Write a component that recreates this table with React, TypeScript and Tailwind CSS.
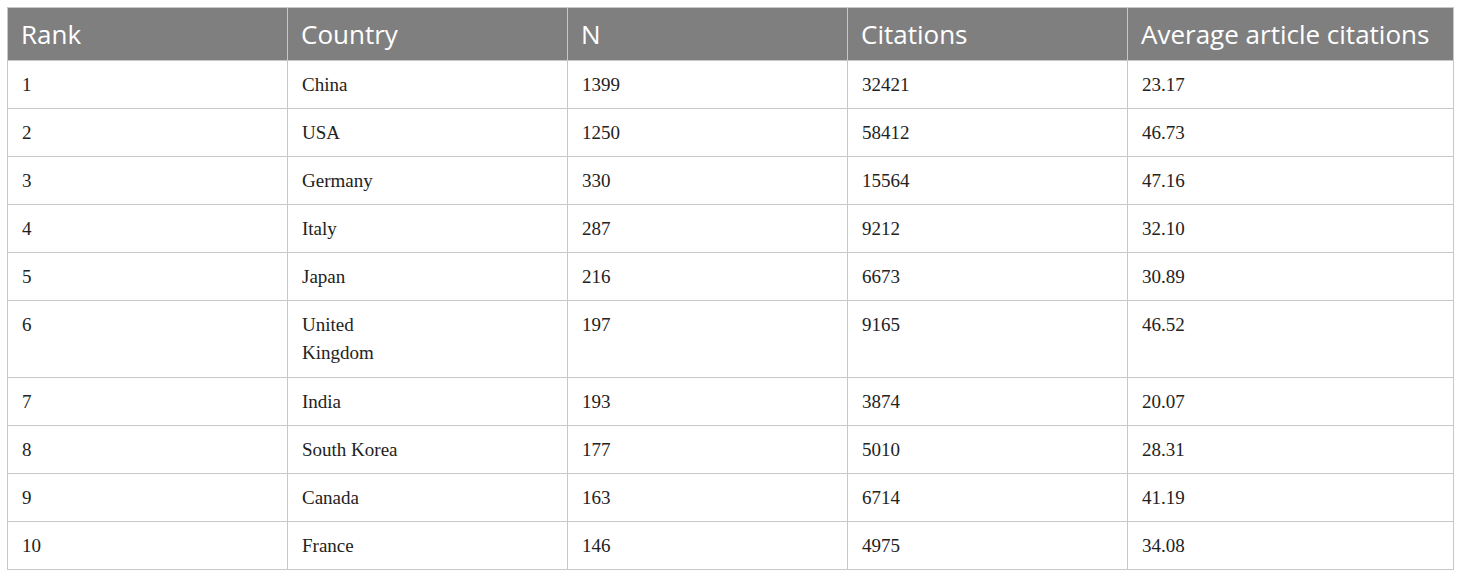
const header = ["Rank", "Country", "N", "Citations", "Average article citations"];

const rows: { rank: string; country: string[]; n: string; citations: string; avg: string }[] = [
  { rank: "1", country: ["China"], n: "1399", citations: "32421", avg: "23.17" },
  { rank: "2", country: ["USA"], n: "1250", citations: "58412", avg: "46.73" },
  { rank: "3", country: ["Germany"], n: "330", citations: "15564", avg: "47.16" },
  { rank: "4", country: ["Italy"], n: "287", citations: "9212", avg: "32.10" },
  { rank: "5", country: ["Japan"], n: "216", citations: "6673", avg: "30.89" },
  { rank: "6", country: ["United", "Kingdom"], n: "197", citations: "9165", avg: "46.52" },
  { rank: "7", country: ["India"], n: "193", citations: "3874", avg: "20.07" },
  { rank: "8", country: ["South Korea"], n: "177", citations: "5010", avg: "28.31" },
  { rank: "9", country: ["Canada"], n: "163", citations: "6714", avg: "41.19" },
  { rank: "10", country: ["France"], n: "146", citations: "4975", avg: "34.08" },
];

export default function App() {
  return (
    <div className="min-h-screen w-full bg-white pl-[7px] pt-[7px]">
      <table className="w-[1446px] table-fixed border-collapse border border-[#c8c8c8]">
        <colgroup>
          <col className="w-[280px]" />
          <col className="w-[280px]" />
          <col className="w-[280px]" />
          <col className="w-[280px]" />
          <col className="w-[326px]" />
        </colgroup>
        <thead>
          <tr className="h-[53px] bg-[#7f7f7f]">
            {header.map((h) => (
              <th
                key={h}
                className="border border-[#c8c8c8] px-[13px] pt-[11px] pb-0 text-left align-top font-['Open_Sans',sans-serif] text-[26px] font-normal leading-[30px] text-white"
              >
                {h}
              </th>
            ))}
          </tr>
        </thead>
        <tbody className="font-['Liberation_Serif',serif] text-[19px] leading-[28px] text-[#222]">
          {rows.map((r) => (
            <tr key={r.rank} className={r.country.length > 1 ? "h-[77px]" : "h-[48px]"}>
              <td className="border border-[#c8c8c8] px-[14px] pt-[10px] align-top">{r.rank}</td>
              <td className="border border-[#c8c8c8] px-[14px] pt-[10px] align-top">
                {r.country.map((c, i) => (
                  <div key={i}>{c}</div>
                ))}
              </td>
              <td className="border border-[#c8c8c8] px-[14px] pt-[10px] align-top">{r.n}</td>
              <td className="border border-[#c8c8c8] px-[14px] pt-[10px] align-top">{r.citations}</td>
              <td className="border border-[#c8c8c8] px-[14px] pt-[10px] align-top">{r.avg}</td>
            </tr>
          ))}
        </tbody>
      </table>
    </div>
  );
}
